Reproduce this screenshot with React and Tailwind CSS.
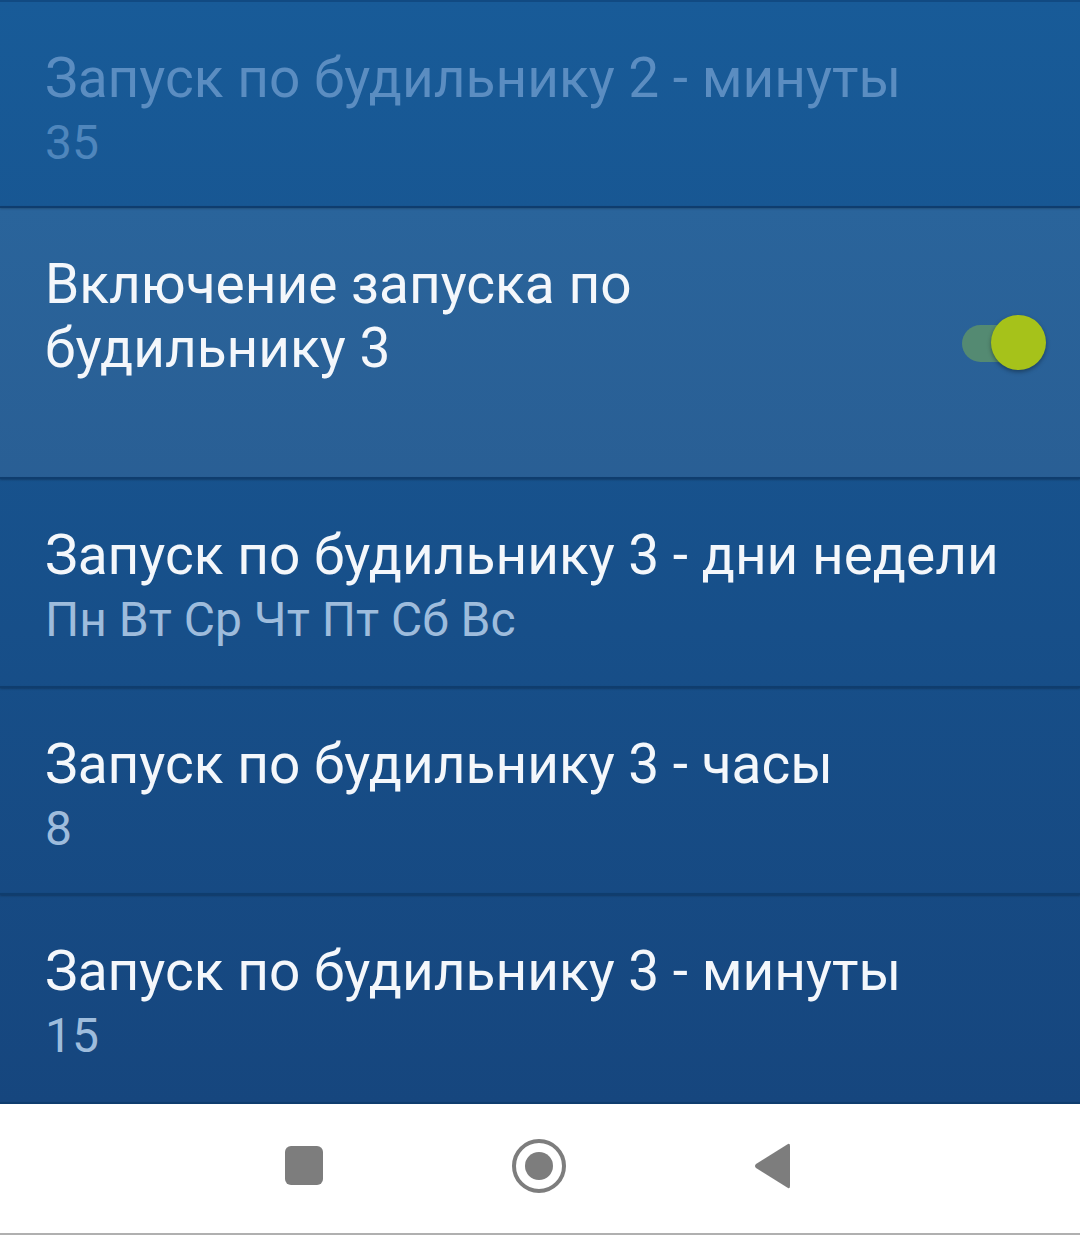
import React from 'react';

const font = { fontFamily: 'Roboto, "Noto Sans", sans-serif' };

function Row({ title, value, disabled, highlight, children, height }) {
  return (
    <div className={`relative flex items-start justify-between pl-[45px] pr-[32px] pt-[44px] ${highlight ? 'bg-white/[0.08]' : ''} ${height}`}>
      <div className="flex flex-col">
        <div className={`text-[55px] leading-[64px] ${disabled ? 'text-[#5b8dc1]' : 'text-[#f4f7fb]'}`}>{title}</div>
        {value && (
          <div className={`text-[48px] leading-[66px] ${disabled ? 'text-[#4f86bc]' : 'text-[#9ebcdc]'}`}>{value}</div>
        )}
      </div>
      {children}
    </div>
  );
}

function Divider() {
  return <div className="h-[2px] bg-[#0f3d6e] shadow-[0_1px_2px_rgba(0,0,0,0.25)]" />;
}

function Toggle() {
  return (
    <div className="relative self-center -mt-[44px] h-[56px] w-[88px]">
      <div className="absolute left-[2px] top-[10px] h-[37px] w-[70px] rounded-full bg-[#548a72]" />
      <div className="absolute right-[2px] top-0 h-[55px] w-[55px] rounded-full bg-[#a6c21a] shadow-[0_2px_4px_rgba(0,0,0,0.35)]" />
    </div>
  );
}

export default function App() {
  return (
    <div className="w-[1080px] h-[1235px] flex flex-col overflow-hidden" style={font}>
      <div className="flex flex-col bg-gradient-to-b from-[#185b98] to-[#16467e]">
        <div className="h-[2px] bg-[#114a82]" />
        <Row title="Запуск по будильнику 2 - минуты" value="35" disabled height="h-[204px]" />
        <Divider />
        <Row
          title={<>Включение запуска по<br />будильнику 3</>}
          highlight
          height="h-[269px]"
        >
          <Toggle />
        </Row>
        <Divider />
        <Row title="Запуск по будильнику 3 - дни недели" value="Пн Вт Ср Чт Пт Сб Вс" height="h-[207px]" />
        <Divider />
        <Row title="Запуск по будильнику 3 - часы" value="8" height="h-[205px]" />
        <Divider />
        <Row title="Запуск по будильнику 3 - минуты" value="15" height="h-[207px]" />
        <Divider />
      </div>
      <div className="flex-1 bg-white flex flex-col">
        <div className="flex-1 flex items-center pb-[6px]">
          <div className="ml-[285px] h-[39px] w-[38px] rounded-[6px] bg-[#7d7d7d]" />
          <svg className="ml-[188px]" width="56" height="56" viewBox="0 0 56 56">
            <circle cx="28" cy="28" r="25" fill="none" stroke="#7d7d7d" strokeWidth="4" />
            <circle cx="28" cy="28" r="14" fill="#7d7d7d" />
          </svg>
          <svg className="ml-[186px]" width="38" height="48" viewBox="0 0 38 48">
            <path d="M35 2 Q37 1 37 4 L37 44 Q37 47 35 46 L3 26 Q1 24 3 22 Z" fill="#7d7d7d" />
          </svg>
        </div>
        <div className="h-[2px] bg-[#b0b0b0]" />
      </div>
    </div>
  );
}
